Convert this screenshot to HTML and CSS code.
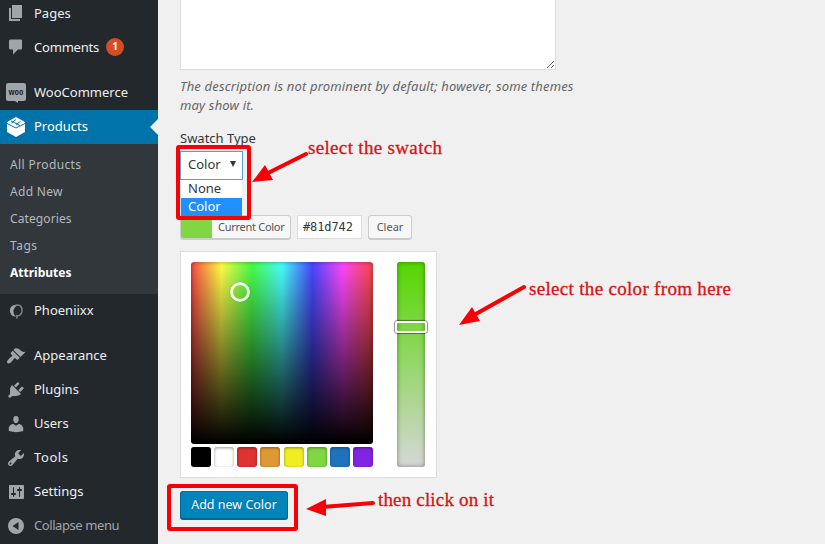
FILE: index.html
```html
<!DOCTYPE html>
<html lang="en">
<head>
<meta charset="utf-8">
<title>Product Attributes</title>
<link rel="stylesheet" href="styles.css">
</head>
<body>
<div class="app">
  <nav class="sidebar">
    <a class="item"><svg class="icon" viewBox="0 0 20 20"><path d="M6 2h10v13H6zM3 5h2v11h9v2H3z"/></svg><span class="t-pages">Pages</span></a>
    <a class="item"><svg class="icon" viewBox="0 0 20 20"><path d="M4.500 2.500h10.500q1 0 1 1v8q0 1-1 1H12l-5 5v-5H4.500q-1.500 0-1.500-1.500V4q0-1.500 1.500-1.500z"/></svg><span class="t-comments">Comments</span><b class="badge">1</b></a>
    <div class="sep"></div>
    <a class="item"><svg class="icon woo" viewBox="0 0 20 20"><path d="M2 0h16q2 0 2 2v14q0 2-2 2h-6v2l-3-2H2q-2 0-2-2V2q0-2 2-2z"/><text x="10" y="11.500" text-anchor="middle" textLength="15" lengthAdjust="spacingAndGlyphs">woo</text></svg><span class="t-woo">WooCommerce</span></a>
    <a class="item current"><svg class="icon" viewBox="0 0 20 20"><path d="M10 0l9 5v10l-9 5-9-5V5z"/><path class="cut" d="M1 6.500l9 4.500 9-4.500M5 4l9 4.500M10 2.500L5.500 6M14.500 4.500L10 7.500"/></svg><span class="t-products">Products</span></a>
    <div class="submenu">
      <a class="t-all">All Products</a>
      <a class="t-add">Add New</a>
      <a class="t-cat">Categories</a>
      <a class="t-tags">Tags</a>
      <a class="active t-attr">Attributes</a>
    </div>
    <a class="item"><svg class="icon" viewBox="0 0 20 20"><path d="M12 4C7 2.500 3.500 6 4 10.500c.4 3.500 3.500 5.500 6 5-3.500-2.500-4-8.500 2-11.500z"/><path class="ring" d="M9 5c4-2.500 7.500.5 7 5-.3 4-3.500 5.500-6 4.500M11.500 14.500l-1 3"/></svg><span class="t-pho">Phoeniixx</span></a>
    <div class="sep"></div>
    <a class="item"><svg class="icon" viewBox="0 0 20 20"><path d="M14.480 11.060L7.410 3.990l1.500-1.500c.5-.56 2.300-.47 3.510.32 1.210.8 1.430 1.280 2.910 2.100 1.180.64 2.450 1.260 4.450.85zm-.71.71L6.700 4.700 4.930 6.470c-.39.39-.39 1.020 0 1.410l1.060 1.060c.39.39.39 1.030 0 1.420-.6.6-1.430 1.110-2.210 1.690-.35.26-.7.53-1.010.84C1.430 14.230.4 16.080 1.400 17.070c.99 1 2.840-.03 4.180-1.360.31-.31.58-.66.85-1.020.57-.78 1.080-1.610 1.690-2.210.39-.39 1.020-.39 1.410 0l1.060 1.060c.39.39 1.020.39 1.410 0z"/></svg><span class="t-app">Appearance</span></a>
    <a class="item"><svg class="icon" viewBox="0 0 20 20"><path d="M13.110 4.360L9.870 7.600 8 5.730l3.240-3.240c.35-.34 1.050-.2 1.560.32.52.51.66 1.210.31 1.550zm-8 1.770l.91-1.120 9.010 9.010-1.190.84c-.71.71-2.630 1.160-3.820 1.160H6.140L4.900 17.260c-.59.59-1.540.59-2.120 0-.59-.58-.59-1.530 0-2.120l1.240-1.240v-3.880c0-1.130.4-3.190 1.090-3.890zm7.260 3.970l3.240-3.240c.34-.35 1.040-.21 1.550.31.52.51.66 1.210.31 1.550l-3.240 3.250z"/></svg><span class="t-plug">Plugins</span></a>
    <a class="item"><svg class="icon" viewBox="0 0 20 20"><path d="M10 9.250c-2.270 0-2.730-3.440-2.730-3.440C7 4.020 7.820 2 9.970 2c2.160 0 2.980 2.020 2.710 3.810 0 0-.41 3.440-2.680 3.440zm0 2.570L12.720 10c2.390 0 4.520 2.330 4.520 4.530v2.490s-3.650 1.130-7.240 1.130c-3.650 0-7.240-1.130-7.240-1.130v-2.490c0-2.250 1.940-4.480 4.470-4.480z"/></svg><span class="t-users">Users</span></a>
    <a class="item"><svg class="icon" viewBox="0 0 20 20"><path d="M16.680 9.770c-1.340 1.340-3.300 1.670-4.950.99l-5.410 6.520c-.99.99-2.590.99-3.580 0s-.99-2.590 0-3.570l6.520-5.420c-.68-1.650-.35-3.610.99-4.950 1.280-1.280 3.120-1.620 4.720-1.060l-2.890 2.890 2.820 2.820 2.860-2.870c.53 1.580.18 3.390-1.080 4.650zM3.810 16.210c.4.39 1.040.39 1.430 0 .4-.4.4-1.040 0-1.430-.39-.4-1.030-.4-1.430 0-.39.39-.39 1.030 0 1.430z"/></svg><span class="t-tools">Tools</span></a>
    <a class="item"><svg class="icon" viewBox="0 0 20 20"><path d="M18 16V4c0-.55-.45-1-1-1H4c-.55 0-1 .45-1 1v12c0 .55.45 1 1 1h13c.55 0 1-.45 1-1zM8 11h1c.55 0 1 .45 1 1s-.45 1-1 1H8v1.500c0 .28-.22.5-.5.5s-.5-.22-.5-.5V13H6c-.55 0-1-.45-1-1s.45-1 1-1h1V5.500c0-.28.22-.5.5-.5s.5.22.5.5V11zm5-2h-1c-.55 0-1-.45-1-1s.45-1 1-1h1V5.500c0-.28.22-.5.5-.5s.5.22.5.5V7h1c.55 0 1 .45 1 1s-.45 1-1 1h-1v5.500c0 .28-.22.5-.5.5s-.5-.22-.5-.5V9z"/></svg><span class="t-set">Settings</span></a>
    <a class="item collapse"><svg class="icon" viewBox="0 0 20 20"><circle cx="10" cy="10" r="8"/><path class="arrow" d="M12.500 6v8L6.500 10z"/></svg><span class="t-col">Collapse menu</span></a>
  </nav>

  <main class="content">
    <textarea class="description"></textarea>
    <p class="help"><span>The description is not prominent by default; however, some themes</span><br><span>may show it.</span></p>
    <div class="label"><span>Swatch Type</span></div>
    <div class="select"><span>Color</span><i class="caret"></i>
      <div class="options"><div><span>None</span></div><div class="chosen"><span>Color</span></div></div>
    </div>
    <div class="tools">
      <div class="button current-color"><i class="chip"></i><span class="t-cc">Current Color</span></div>
      <div class="hex"><span>#81d742</span></div>
      <div class="button clear"><span>Clear</span></div>
    </div>
    <div class="picker">
      <div class="left">
        <div class="spectrum"><i class="handle"></i></div>
        <div class="palette">
          <i class="black"></i><i class="white"></i><i class="red"></i><i class="orange"></i><i class="yellow"></i><i class="green"></i><i class="blue"></i><i class="purple"></i>
        </div>
      </div>
      <div class="strip"><i class="grip"></i></div>
    </div>
    <div class="submit"><span>Add new Color</span></div>
  </main>

  <svg class="notes" viewBox="0 0 825 544">
    <rect x="178" y="147" width="71" height="71" rx="1"/>
    <rect x="169" y="486" width="127" height="43" rx="1"/>
    <path d="M306 154L266 174M524 287L474 315M373 503L322 507"/>
    <path class="head" d="M252 182l13-17 8 15zM459 325l13-18 8 14zM306 509l20-10v17z"/>
    <text x="308" y="154" textLength="134">select the swatch</text>
    <text x="529" y="295" textLength="202">select the color from here</text>
    <text x="378" y="506" textLength="116">then click on it</text>
  </svg>
</div>
</body>
</html>
```
FILE: styles.css
```css
* { box-sizing: border-box; }
body { margin: 0; background: #f0f0f0; font: 13px/18px "Noto Sans", sans-serif; color: #32373c; }
.app { position: relative; display: flex; width: 825px; height: 544px; overflow: hidden; }
span, .submenu a { white-space: nowrap; }

.sidebar { width: 158px; flex: none; background: #23282d; margin-top: -4px; height: 548px; color: #eee; }
.item { position: relative; display: flex; align-items: center; height: 34px; padding-left: 6px; }
.icon { width: 20px; height: 20px; margin-right: 8px; fill: #a0a5aa; flex: none; overflow: visible; }
.item span { padding-bottom: 2px; }
.item:nth-child(-n+2) span { padding-bottom: 0; }
.sep { height: 12px; }
.submenu + .item + .sep { height: 11px; }
.current { background: #0073aa; color: #fff; }
.current .icon { fill: #fff; }
.current::after { content: ""; position: absolute; right: 0; top: 9px; border: 8px solid transparent; border-left: 0; border-right-color: #f0f0f0; }
.badge { width: 18px; height: 18px; margin-left: 7px; border-radius: 9px; background: #d54e21; color: #fff; font-size: 10px; line-height: 17px; text-align: center; }
.cut { fill: none; stroke: #0073aa; stroke-width: 1; }
.ring { fill: none; stroke: #7d8287; stroke-width: 1.5; }
.arrow { fill: #23282d; }
.woo text { font: bold 8px "Noto Sans", sans-serif; fill: #23282d; }
.t-comments { letter-spacing: -.2px; }
.t-tools { letter-spacing: .6px; }
.t-col { letter-spacing: -.42px; }
.t-all { letter-spacing: .38px; }
.t-add { letter-spacing: .3px; }
.t-cat { letter-spacing: .1px; }
.t-tags { letter-spacing: .5px; }
.submenu { display: flex; flex-direction: column; height: 150px; padding: 7px 10px 8px; background: #32373c; color: #b4b9be; font-size: 12px; }
.submenu a { height: 27px; line-height: 27px; }
.submenu .active { color: #fff; font-weight: 700; }
.collapse { color: #a0a5aa; }

.content { padding-left: 22px; width: 430px; }
.description { display: block; width: 376px; height: 90px; margin: -20px 0 0; border: 1px solid #ddd; background: #fff; resize: both; }
.help { margin: 7px 0 0; height: 39px; line-height: 19px; font-style: italic; color: #666; letter-spacing: .16px; }
.label { margin-top: 12px; height: 20px; line-height: 20px; }
.select { position: relative; display: flex; align-items: center; width: 63px; height: 29px; margin-top: 3px; padding: 0 7px 3px; justify-content: space-between; background: #fff; border: 1px solid #5b9dd9; font-size: 13px; }
.caret { border: 3.5px solid transparent; border-top: 6px solid #32373c; border-bottom: 0; margin-right: -1px; }
.options { position: absolute; left: 0; top: 28px; width: 61px; background: #fff; }
.options div { height: 18px; padding-left: 7px; line-height: 16px; }
.options .chosen { background: #1e90ff; color: #fff; }
.tools { display: flex; margin-top: 35px; height: 24px; }
.button { display: flex; align-items: center; height: 24px; border: 1px solid #ccc; border-radius: 3px; background: #f7f7f7; box-shadow: 0 1px 0 #ccc; color: #555; font-size: 11px; overflow: hidden; }
.current-color { width: 111px; }
.t-cc { letter-spacing: -.28px; }
.chip { width: 31px; height: 24px; background: #81d742; margin-right: 6px; flex: none; }
.hex { width: 65px; height: 24px; margin-left: 6px; padding-left: 5px; border: 1px solid #ddd; background: #fff; font: 12px/22px "DejaVu Sans Mono", monospace; letter-spacing: -.1px; }
.clear { width: 44px; margin-left: 6px; justify-content: center; }
.picker { display: flex; width: 257px; height: 227px; margin-top: 12px; padding: 10px; gap: 24px; background: #fff; border: 1px solid #ddd; }
.left { width: 182px; }
.spectrum { position: relative; height: 182px; border-radius: 3px; box-shadow: inset 0 0 5px rgba(0,0,0,.4); background: linear-gradient(to top, #000 0%, rgba(0,0,0,0) 100%), linear-gradient(to right, #ff4848, #ffff48 16.67%, #48ff48 33.33%, #48ffff 50%, #4848ff 66.67%, #ff48ff 83.33%, #ff4848); }
.handle { position: absolute; left: 39px; top: 20px; width: 20px; height: 20px; border: 3px solid #fff; border-radius: 50%; opacity: .85; box-shadow: 0 0 1px rgba(0,0,0,.6); }
.palette { display: flex; justify-content: space-between; margin-top: 3px; }
.palette i { width: 20px; height: 20px; border-radius: 3px; box-shadow: inset 0 1px 3px rgba(0,0,0,.4); }
.black { background: #000; } .white { background: #fff; } .red { background: #d33; } .orange { background: #d93; }
.yellow { background: #ee2; } .green { background: #81d742; } .blue { background: #1e73be; } .purple { background: #8224e3; }
.strip { position: relative; width: 28px; height: 205px; border-radius: 3px; box-shadow: inset 0 0 5px rgba(0,0,0,.4); background: linear-gradient(#55d600, #d7d7d7); }
.grip { position: absolute; left: -2px; top: 59px; width: 32px; height: 12px; border: 2px solid #fff; border-radius: 3px; box-shadow: 0 0 1px 1px rgba(0,0,0,.45); }
.submit { display: flex; align-items: center; justify-content: center; width: 108px; height: 28px; margin-top: 13px; border: 1px solid #006799; border-top-color: #0073aa; border-radius: 3px; background: #0085ba; box-shadow: 0 1px 0 #006799; color: #fff; text-shadow: 0 -1px 1px #006799; font-size: 12.5px; }

.notes { position: absolute; left: 0; top: 0; width: 825px; height: 544px; fill: none; stroke: #f90006; stroke-width: 4; pointer-events: none; stroke-linecap: round; }
.notes .head { fill: #f90006; stroke: none; }
.notes text { fill: #d81313; stroke: #d81313; stroke-width: .3; font: 19px "Liberation Serif", serif; }
```
